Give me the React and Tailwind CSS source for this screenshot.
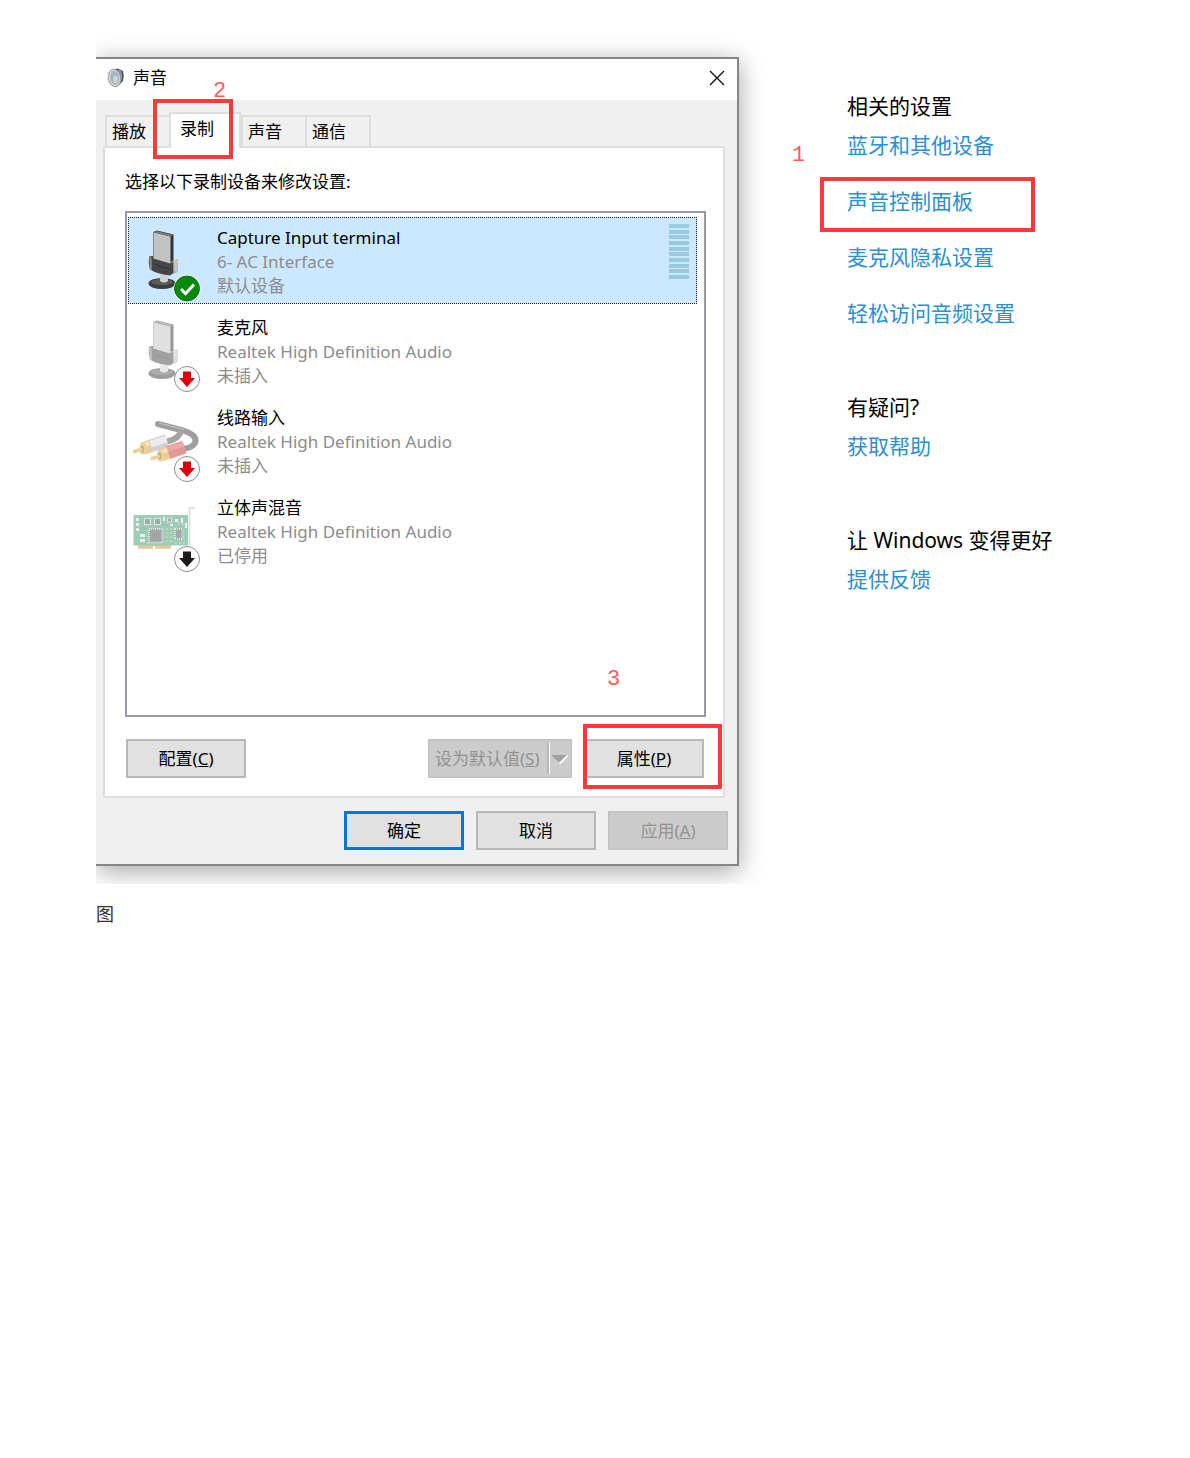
import React, { useState } from "react";

const tabs = ["播放", "录制", "声音", "通信"];

const devices = [
  { name: "Capture Input terminal", driver: "6- AC Interface", status: "默认设备", icon: "mic", badge: "default" },
  { name: "麦克风", driver: "Realtek High Definition Audio", status: "未插入", icon: "mic", badge: "unplugged" },
  { name: "线路输入", driver: "Realtek High Definition Audio", status: "未插入", icon: "line", badge: "unplugged" },
  { name: "立体声混音", driver: "Realtek High Definition Audio", status: "已停用", icon: "card", badge: "disabled" },
];

const sections = [
  { title: "相关的设置", links: ["蓝牙和其他设备", "声音控制面板", "麦克风隐私设置", "轻松访问音频设置"] },
  { title: "有疑问?", links: ["获取帮助"] },
  { title: "让 Windows 变得更好", links: ["提供反馈"] },
];

const SpeakerIcon = () => (
  <svg width="20" height="20" viewBox="0 0 20 20" aria-hidden="true">
    <path d="M7 1.500 L12 0.500 L17 3 Q18.500 8 17 13 L13 17 L10 19 Z" fill="#4b4f52" />
    <path d="M12 1 L15.500 3 Q17 8 15.500 13 L13 15 Z" fill="#8e9396" />
    <ellipse cx="8.500" cy="10" rx="6" ry="8.800" transform="rotate(-10 8.500 10)" fill="#d5dadd" stroke="#9a9fa3" />
    <ellipse cx="8.700" cy="10" rx="4.500" ry="7" transform="rotate(-10 8.700 10)" fill="#a5b5c0" />
    <ellipse cx="9.500" cy="11.500" rx="2.500" ry="4" fill="#c6d3dc" />
    <path d="M2 4 V14" stroke="#c3c7c9" strokeWidth="1.500" strokeDasharray="1.500 1.500" />
  </svg>
);

const Mic = () => (
  <g>
    <ellipse cx="33" cy="65.500" rx="13.500" ry="5.500" fill="#3d3d3d" />
    <ellipse cx="33" cy="64" rx="11" ry="3" fill="#5c5c5c" />
    <path d="M31 54 H39 V63 Q35 66 31 63 Z" fill="#d2d2d2" />
    <path d="M24.500 14 L28 12.500 L44.500 16.500 V44 L40.500 46 L24.500 41 Z" fill="#333" />
    <path d="M25 14.500 L41.500 18.500 V46 L25 41 Z" fill="#c2c2c2" />
    <path d="M25 14.500 L28 13 L44 17 L41 18.500 Z" fill="#7b7b7b" />
    <path d="M41 44 L48.500 41 Q49.500 47 48.500 54 L41 57 Z" fill="#8f8f8f" />
    <path d="M44.500 42.500 L48.500 41 Q49.500 47 48.500 54 L45.500 55 Z" fill="#c4c4c4" />
    <path d="M20 38.500 L24 38 V40.500 L41 45.500 L44 44 V55 L41 57.500 Q28 56 21 51.500 Q19 45 20 38.500 Z" fill="#454545" />
    <path d="M20 39 L22.500 39.500 L23 52.500 L21 51.500 Z" fill="#888" />
    <path d="M25 46 Q33 50 41 51" stroke="#303030" fill="none" />
  </g>
);

const LineIn = () => (
  <g fill="none">
    <path d="M29 26 L54 32.500 Q69 37 66 45 Q63 50 55 50.500" stroke="#3f3f3f" strokeWidth="6" strokeLinecap="round" />
    <path d="M52 33 Q50 41 38 43.500" stroke="#4d4d4d" strokeWidth="6" />
    <path d="M30 25 L55 31.500" stroke="#777" strokeWidth="1.500" />
    <path d="M38 42.500 L20 48.500" stroke="#a5a5b2" strokeWidth="12.500" />
    <path d="M37.500 41 L19 47" stroke="#d8d8e2" strokeWidth="7" />
    <path d="M22 48 L14 50.500" stroke="#d49c38" strokeWidth="12.500" />
    <path d="M20 45.500 L13 48" stroke="#f2cf72" strokeWidth="4" />
    <ellipse cx="14" cy="50.500" rx="3.500" ry="6.200" fill="#d8a446" />
    <ellipse cx="13" cy="51" rx="2" ry="3.500" fill="#855f27" />
    <path d="M12 51.500 L5.500 53.500" stroke="#dba53e" strokeWidth="3.500" strokeLinecap="round" />
    <path d="M55.500 49 L38 55" stroke="#c9342a" strokeWidth="13" />
    <path d="M54.500 46 L37 52" stroke="#e0584d" strokeWidth="4.500" />
    <path d="M39.500 54.500 L32 57" stroke="#d49c38" strokeWidth="12.500" />
    <path d="M38 52 L31 54.500" stroke="#f2cf72" strokeWidth="4" />
    <ellipse cx="31.500" cy="57.500" rx="3.500" ry="6.200" fill="#d8a446" />
    <ellipse cx="30.500" cy="58" rx="2" ry="3.500" fill="#855f27" />
    <path d="M29.500 58.500 L23 60.500" stroke="#dba53e" strokeWidth="3.500" strokeLinecap="round" />
  </g>
);

const Card = () => (
  <g>
    <path d="M4.500 27 H59 V57.500 H42 V60.500 H26 V58 H24 V60.500 H9 V57.500 H4.500 Z" fill="#3f9d71" />
    <path d="M9 57.500 H24 V60.500 H9 Z M26 57.500 H42 V60.500 H26 Z" fill="#dd8e2d" />
    <path d="M60.500 58 V20 H66" stroke="#c4c4c4" strokeWidth="2" fill="none" />
    <g fill="#4a5551" stroke="#b9cfc5" strokeWidth="1">
      <rect x="20" y="41" width="13.500" height="13.500" fill="#4d4d4d" strokeDasharray="1 1" strokeWidth="2" />
      <rect x="46" y="41" width="7.500" height="10" strokeDasharray="1 1" strokeWidth="2" />
      <rect x="15.500" y="30.500" width="6" height="6" />
      <rect x="25.500" y="30.500" width="6" height="6" />
      <rect x="38.500" y="30" width="4" height="4" />
    </g>
    <g fill="#d7e3dd">
      <path d="M7 30 H10 V33 H7 Z M7 35 H10 V38 H7 Z M7 40 H10 V43 H7 Z M11 46 H16 V49 H11 Z M11 51 H16 V54 H11 Z" />
      <path d="M34 29 H36 V33 H34 Z M46 31 H49 V34 H46 Z M52 30 H54 V35 H52 Z M56 35 H58 V40 H56 Z M41 36 H44 V38 H41 Z" />
    </g>
    <path d="M38 40 V55 M42 40 V55 M49 36 H56 M46 55 H56" stroke="#b9a95a" strokeWidth="1.500" strokeDasharray="2 2" />
    <path d="M12 40 H17 M34 37 H38 M12 44 H17" stroke="#2f7352" />
  </g>
);

const Badge = ({ type }) => {
  if (type === "default") {
    return (
      <g>
        <circle cx="58" cy="70.500" r="13.500" fill="#fff" />
        <circle cx="58" cy="70.500" r="12.500" fill="#078a0b" stroke="#116f14" />
        <path d="M52 71 L56.500 75.500 L65 66.500" fill="none" stroke="#fff" strokeWidth="3" />
      </g>
    );
  }
  return (
    <g>
      <circle cx="58" cy="71" r="12.500" fill="#fff" stroke="#8d8d8d" />
      <path
        d="M54 63.500 H62 V70 H66 L58 79 L50 70 H54 Z"
        fill={type === "disabled" ? "#1b1b1b" : "#dc0008"}
      />
    </g>
  );
};

const DeviceIcon = ({ icon, badge }) => (
  <svg className="shrink-0" width="74" height="85" viewBox="0 0 74 85" aria-hidden="true">
    <g opacity={badge === "default" ? 1 : 0.5}>
      {icon === "mic" && <Mic />}
      {icon === "line" && <LineIn />}
      {icon === "card" && <Card />}
    </g>
    <Badge type={badge} />
  </svg>
);

const Meter = () => (
  <div className="mt-[6px] mr-[7px] flex h-[55px] w-5 flex-col justify-between">
    {[...Array(10)].map((_, i) => (
      <span key={i} className="h-1 bg-[#99cae0]" />
    ))}
  </div>
);

// numbered red frame drawn over a control
const Mark = ({ box, label, number }) => (
  <>
    <span className={`pointer-events-none absolute z-10 border-4 border-[#fd3939] ${box}`} />
    <span className={`pointer-events-none absolute z-10 font-['Liberation_Mono'] text-[22px] leading-6 text-[#ff5c5c] ${label}`}>
      {number}
    </span>
  </>
);

const borders = {
  normal: "border-2 border-[#b8b8b8]",
  primary: "border-[3px] border-[#0078d7]",
};

const Button = ({ children, variant = "normal", className = "", ...rest }) => (
  <button
    type="button"
    className={`h-[39px] bg-[#e1e1e1] text-center leading-6 disabled:border-[#c3c3c3] disabled:bg-[#cccccc] disabled:text-[#929292] ${borders[variant]} ${className}`}
    {...rest}
  >
    {children}
  </button>
);

const SoundDialog = () => {
  const [tab, setTab] = useState(1);
  const [selected, setSelected] = useState(0);

  return (
    <section
      aria-label="声音"
      className="min-w-0 flex-1 border-y-2 border-r-2 border-[#868686] bg-[#f0f0f0] text-[17px] text-black shadow-[0_5px_24px_rgba(0,0,0,0.36)]"
    >
      <header className="flex h-[41px] items-center bg-white pr-3 pb-1 pl-[10px]">
        <SpeakerIcon />
        <h1 className="ml-[7px] flex-1 leading-6">声音</h1>
        <button type="button" aria-label="关闭">
          <svg width="16" height="16" viewBox="0 0 16 16">
            <path d="M1 1 L15 15 M15 1 L1 15" stroke="#111" strokeWidth="1.400" />
          </svg>
        </button>
      </header>

      <div className="pt-3 pr-3 pl-[7px]">
        <div role="tablist" className="relative z-10 -mb-[2px] flex items-end pl-[2px]">
          {tabs.map((t, i) => (
            <div key={t} className={tab === i ? "relative" : "relative -mr-[2px]"}>
              <button
                type="button"
                role="tab"
                aria-selected={tab === i}
                onClick={() => setTab(i)}
                className={
                  tab === i
                    ? "block h-9 w-[72px] border-2 border-b-0 border-[#dedede] bg-white pr-4 pb-1 leading-6"
                    : "block h-[33px] w-[66px] border-2 border-[#dedede] pr-[18px] leading-6"
                }
              >
                {t}
              </button>
              {i === 1 && <Mark number="2" box="-top-[13px] -left-4 h-[60px] w-20" label="-top-8 left-11" />}
            </div>
          ))}
        </div>

        <div className="border-2 border-[#dedede] bg-white pt-[22px] pr-[17px] pb-[18px] pl-5">
          <p id="device-label" className="leading-6">选择以下录制设备来修改设置:</p>
          <ul
            role="listbox"
            aria-labelledby="device-label"
            className="relative mt-[17px] h-[506px] border-2 border-[#989ba3] pt-1 pr-[7px] pl-px"
          >
            {devices.map((d, i) => (
              <li
                key={d.name}
                role="option"
                aria-selected={selected === i}
                onClick={() => setSelected(i)}
                className={`mb-[3px] flex h-[87px] border ${selected === i ? "border-dotted border-[#222] bg-[#cce8ff]" : "border-transparent"}`}
              >
                <DeviceIcon icon={d.icon} badge={d.badge} />
                <div className="ml-[14px] flex-1 pt-2 leading-6 text-[#8c8c8c]">
                  <p className="text-black">{d.name}</p>
                  <p>{d.driver}</p>
                  <p>{d.status}</p>
                </div>
                {i === 0 && <Meter />}
              </li>
            ))}
          </ul>

          <div className="mt-[22px] flex pr-[2px] pl-px">
            <Button className="w-[120px]">配置(<u>C</u>)</Button>
            <Button disabled className="ml-auto flex w-36 items-center justify-between pr-px pl-[5px]">
              <span>设为默认值(<u>S</u>)</span>
              <svg width="22" height="31" viewBox="0 0 22 31" aria-hidden="true">
                <path d="M1 0 V31" stroke="#a0a0a0" />
                <path d="M2.500 0 V31" stroke="#fff" />
                <path d="M12.500 20.500 L20.500 12.500" stroke="#fff" strokeWidth="2" />
                <path d="M4 12 H20 L12 19.500 Z" fill="#a0a0a0" />
              </svg>
            </Button>
            <div className="relative ml-3">
              <Button className="w-[120px]">属性(<u>P</u>)</Button>
              <Mark number="3" box="-top-[15px] -left-px h-[65px] w-[139px]" label="-top-[71px] left-[23px]" />
            </div>
          </div>
        </div>
      </div>

      <footer className="flex justify-end gap-3 pt-[13px] pr-[9px] pb-[14px]">
        <Button variant="primary" className="w-[120px]">确定</Button>
        <Button className="w-[120px]">取消</Button>
        <Button disabled className="w-[120px]">应用(<u>A</u>)</Button>
      </footer>
    </section>
  );
};

const RelatedSettings = () => (
  <aside className="ml-[108px] w-[247px] shrink-0 pt-[35px] text-[21px] leading-7">
    {sections.map((s) => (
      <section key={s.title} className="mb-[66px]">
        <h2 className="mb-[11px] text-black">{s.title}</h2>
        <ul className="flex flex-col gap-7">
          {s.links.map((l) => (
            <li key={l} className="relative">
              <a href="#" className="text-[#2b8fd0]">{l}</a>
              {l === "声音控制面板" && (
                <Mark number="1" box="-top-[10px] -left-[27px] h-[55px] w-[215px]" label="-top-[43px] -left-[55px]" />
              )}
            </li>
          ))}
        </ul>
      </section>
    ))}
  </aside>
);

const App = () => {
  return (
    <main className="bg-white px-24 pt-[38px] font-['Noto_Sans','Noto_Sans_CJK_SC',sans-serif]">
      <figure className="flex items-start overflow-hidden pt-[19px] pb-[18px]">
        <SoundDialog />
        <RelatedSettings />
      </figure>
      <p className="mt-4 text-lg leading-7 text-[#333]">图</p>
    </main>
  );
};

export default App;
